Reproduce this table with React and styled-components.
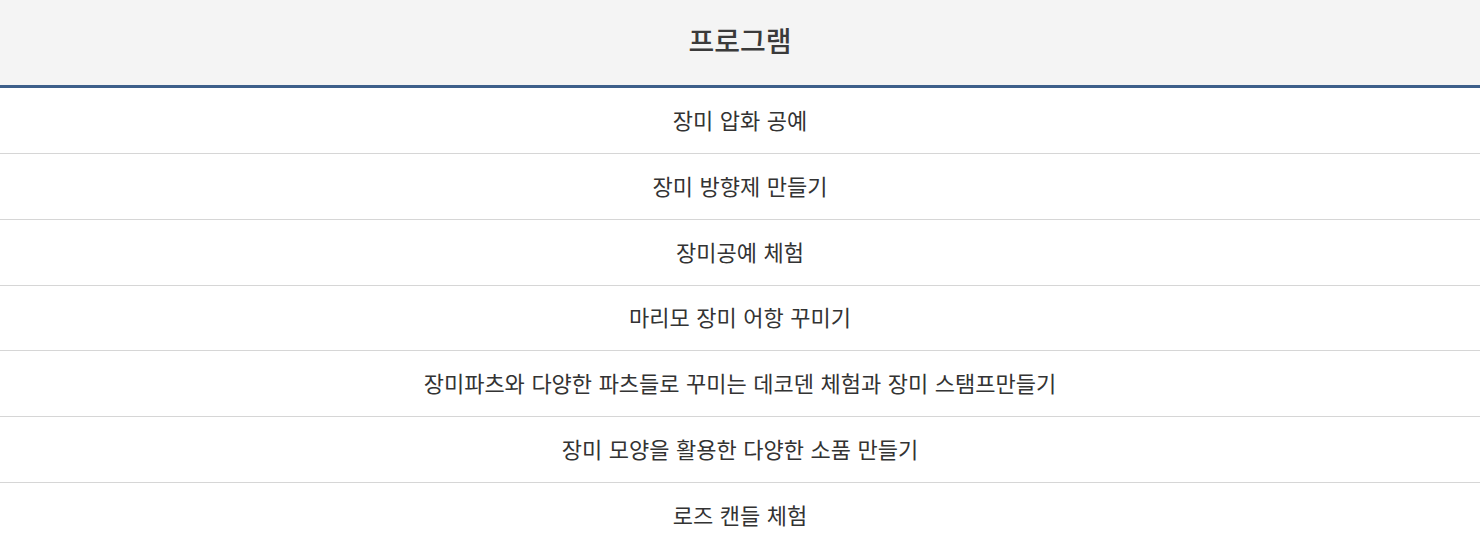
import React from "react";
import styled, { createGlobalStyle } from "styled-components";

const Global = createGlobalStyle`
  html, body { margin: 0; padding: 0; background: #fff; }
  body { font-family: "Noto Sans CJK KR", "Noto Sans", sans-serif; color: #333; }
`;

const Table = styled.table`
  width: 100%;
  border-collapse: collapse;
  table-layout: fixed;
`;

const HeadCell = styled.th`
  height: 79.2px;
  padding: 0 0 6px;
  background: #f4f4f4;
  border-bottom: 3px solid #3d5f8a;
  font-size: 28px;
  font-weight: 500;
  color: #3a3a3a;
  text-align: center;
  vertical-align: middle;
`;

const Cell = styled.td`
  height: 61.8px;
  padding: 0 0 3px;
  font-size: 22px;
  font-weight: 400;
  word-spacing: 1.6px;
  color: #333;
  text-align: center;
  vertical-align: middle;
  border-bottom: ${(p) => (p.$last ? "none" : "1px solid #d6d6d6")};
`;

const programs = [
  "장미 압화 공예",
  "장미 방향제 만들기",
  "장미공예 체험",
  "마리모 장미 어항 꾸미기",
  "장미파츠와 다양한 파츠들로 꾸미는 데코덴 체험과 장미 스탬프만들기",
  "장미 모양을 활용한 다양한 소품 만들기",
  "로즈 캔들 체험",
];

export default function App() {
  return (
    <>
      <Global />
      <Table>
        <thead>
          <tr>
            <HeadCell>프로그램</HeadCell>
          </tr>
        </thead>
        <tbody>
          {programs.map((p, i) => (
            <tr key={i}>
              <Cell $last={i === programs.length - 1}>{p}</Cell>
            </tr>
          ))}
        </tbody>
      </Table>
    </>
  );
}
